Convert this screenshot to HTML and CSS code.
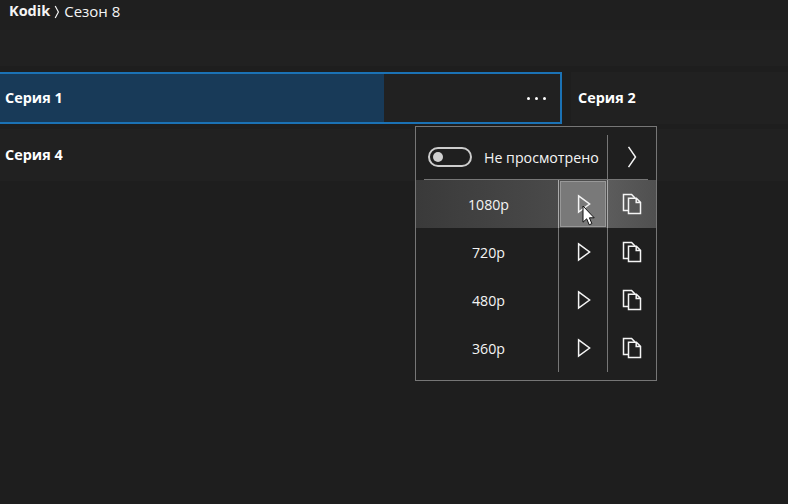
FILE: index.html
```
<!DOCTYPE html>
<html lang="ru">
<head>
  <meta charset="UTF-8">
  <title>Kodik - Сезон 8</title>
  <link rel="stylesheet" href="styles.css">
</head>
<body>
  <!-- icons -->
  <svg class="defs" width="0" height="0">
    <symbol id="play" viewBox="0 0 14 20">
      <path d="M1.6 1.9 L12.6 10 L1.6 18.1 Z" fill="none" stroke="currentColor" stroke-width="1.5"/>
    </symbol>
    <symbol id="copy" viewBox="0 0 20 22">
      <path d="M6.5 17.5 H1.5 V1.5 H9.6 L13 5" fill="none" stroke="currentColor" stroke-width="1.5"/>
      <path d="M6.5 5.3 H14.4 L18.5 9.4 V20.5 H6.5 Z M14.2 5.3 V9.6 H18.5" fill="none" stroke="currentColor" stroke-width="1.5"/>
    </symbol>
  </svg>

  <header class="crumbs">
    <b>Kodik</b>
    <svg class="sep" viewBox="0 0 6 14"><path d="M1.2 1 L4.4 7 L1.2 13" fill="none" stroke="currentColor" stroke-width="1.2"/></svg>
    <span>Сезон 8</span>
  </header>
  <div class="bar"></div>

  <main class="series">
    <div class="item active">
      <div class="progress"></div>
      <span class="name">Серия 1</span>
      <div class="dots"><i></i><i></i><i></i></div>
    </div>
    <div class="item"><span class="name">Серия 2</span></div>
    <div class="item"><span class="name">Серия 4</span></div>
    <div class="item"></div>
  </main>

  <!-- quality menu -->
  <div class="menu">
    <div class="menu-head">
      <div class="watched">
        <span class="toggle"></span>
        <span class="label">Не просмотрено</span>
      </div>
      <div class="next">
        <svg width="12" height="24" viewBox="0 0 12 24"><path d="M2.5 1.8 L9.5 12 L2.5 22.2" fill="none" stroke="currentColor" stroke-width="1.5"/></svg>
      </div>
    </div>
    <div class="row hover">
      <span class="quality">1080p</span>
      <span class="play"><svg width="14" height="20"><use href="#play"/></svg></span>
      <span class="copy"><svg width="20" height="22"><use href="#copy"/></svg></span>
    </div>
    <div class="row">
      <span class="quality">720p</span>
      <span class="play"><svg width="14" height="20"><use href="#play"/></svg></span>
      <span class="copy"><svg width="20" height="22"><use href="#copy"/></svg></span>
    </div>
    <div class="row">
      <span class="quality">480p</span>
      <span class="play"><svg width="14" height="20"><use href="#play"/></svg></span>
      <span class="copy"><svg width="20" height="22"><use href="#copy"/></svg></span>
    </div>
    <div class="row">
      <span class="quality">360p</span>
      <span class="play"><svg width="14" height="20"><use href="#play"/></svg></span>
      <span class="copy"><svg width="20" height="22"><use href="#copy"/></svg></span>
    </div>
  </div>

  <!-- mouse pointer -->
  <svg class="cursor" width="13" height="21" viewBox="0 0 13 21">
    <path d="M1 1 V17.2 L4.7 13.8 L7.2 19.8 L9.9 18.6 L7.4 12.8 H12.2 Z" fill="#fff" stroke="#111" stroke-width="1"/>
  </svg>
</body>
</html>
```
FILE: styles.css
```
* {
  box-sizing: border-box;
}

body {
  margin: 0;
  height: 504px;
  overflow: hidden;
  background: #1e1e1e;
  color: #f4f4f4;
  font: 14.2px/20px "Open Sans", "Noto Sans", sans-serif;
}

.defs {
  position: absolute;
}

/* top */
.crumbs {
  display: flex;
  align-items: center;
  height: 30px;
  padding: 0 0 8px 9px;
  background: #1f1f1f;
  font-size: 15px;
}

.crumbs b {
  font-size: 14.5px;
  font-weight: 700;
}

.sep {
  width: 6px;
  height: 14px;
  margin: 1px 4px 0 4px;
}

.bar {
  height: 36px;
  background: #212121;
}

/* series list */
.series {
  display: grid;
  grid-template-columns: 564px 1fr;
  gap: 5px 9px;
  margin: 6px 0 0 -2px;
}

.item {
  position: relative;
  display: flex;
  align-items: center;
  height: 52px;
  padding: 0 14px 0 7px;
  background: #212121;
}

.item.active {
  border: 2px solid #1b72b5;
  padding-left: 5px;
}

.progress {
  position: absolute;
  left: 0;
  top: 0;
  width: 384px;
  height: 100%;
  background: #183a58;
}

.name {
  position: relative;
  flex: 1;
  font-size: 14.4px;
  font-weight: 700;
  color: #fff;
}

.dots {
  display: flex;
  gap: 5px;
}

.dots i {
  width: 3px;
  height: 3px;
  border-radius: 50%;
  background: #fff;
}

/* menu */
.menu {
  position: absolute;
  left: 415px;
  top: 126px;
  width: 242px;
  height: 255px;
  border: 1px solid #767676;
  background: #1f1f1f;
}

.menu-head {
  display: flex;
  height: 45px;
  margin: 8px 8px 0;
  border-bottom: 1px solid #767676;
}

.watched {
  display: flex;
  align-items: center;
  width: 183px;
  padding-left: 4px;
}

.toggle {
  width: 44px;
  height: 20px;
  margin-right: 12px;
  padding: 3px;
  border: 2px solid #ccc;
  border-radius: 10px;
}

.toggle::before {
  content: "";
  display: block;
  width: 10px;
  height: 10px;
  border-radius: 50%;
  background: #d0d0d0;
}

.label {
  padding-top: 1px;
  white-space: nowrap;
}

.next {
  display: flex;
  flex: 1;
  align-items: center;
  justify-content: center;
  padding-left: 8px;
  border-left: 1px solid #767676;
}

.row {
  display: grid;
  grid-template-columns: 142px 49px 49px;
  height: 48px;
}

.row span {
  display: flex;
  align-items: center;
  justify-content: center;
}

.row .quality {
  padding: 2px 0 0 3px;
}

.play,
.copy {
  border-left: 1px solid #767676;
}

.play {
  padding-left: 2px;
}

.hover {
  background: linear-gradient(to right, #3a3a3a, #4a4a4a 60%, #4e4e4e);
}

.hover .play {
  background: #797979;
  border-color: #aaa;
  box-shadow: inset 0 0 0 1px #4c4c4c, inset 0 0 0 2px #989898;
}

.hover .copy {
  background: linear-gradient(to right, #5c5c5c, #505050);
  border-color: #aaa;
}

.cursor {
  position: absolute;
  left: 582px;
  top: 205px;
}
```
